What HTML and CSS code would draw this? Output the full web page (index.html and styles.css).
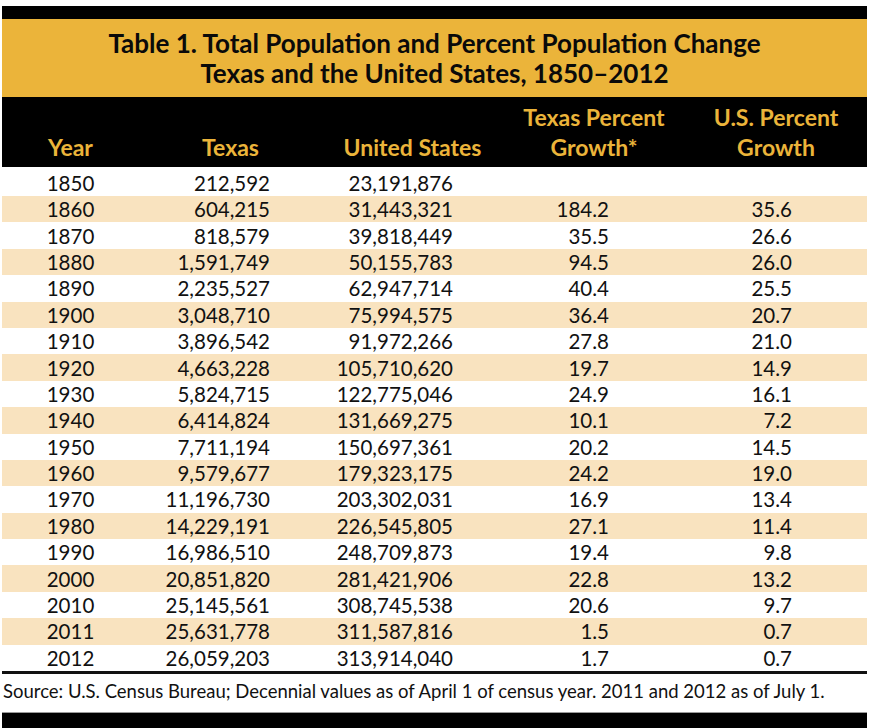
FILE: index.html
```html
<!DOCTYPE html>
<html>
<head>
<meta charset="utf-8">
<link rel="stylesheet" href="styles.css">
</head>
<body>
<div class="page">
  <div class="topbar"></div>
  <div class="title">
    <div>Table 1. Total Population and Percent Population Change</div>
    <div>Texas and the United States, 1850–2012</div>
  </div>
  <table class="data">
    <colgroup>
      <col class="c1"><col class="c2"><col class="c3"><col class="c4"><col class="c5">
    </colgroup>
    <thead>
      <tr>
        <th>Year</th>
        <th>Texas</th>
        <th>United States</th>
        <th>Texas Percent<br>Growth*</th>
        <th>U.S. Percent<br>Growth</th>
      </tr>
    </thead>
    <tbody>
      <tr class="first"><td>1850</td><td>212,592</td><td>23,191,876</td><td></td><td></td></tr>
      <tr class="alt"><td>1860</td><td>604,215</td><td>31,443,321</td><td>184.2</td><td>35.6</td></tr>
      <tr><td>1870</td><td>818,579</td><td>39,818,449</td><td>35.5</td><td>26.6</td></tr>
      <tr class="alt"><td>1880</td><td>1,591,749</td><td>50,155,783</td><td>94.5</td><td>26.0</td></tr>
      <tr><td>1890</td><td>2,235,527</td><td>62,947,714</td><td>40.4</td><td>25.5</td></tr>
      <tr class="alt"><td>1900</td><td>3,048,710</td><td>75,994,575</td><td>36.4</td><td>20.7</td></tr>
      <tr><td>1910</td><td>3,896,542</td><td>91,972,266</td><td>27.8</td><td>21.0</td></tr>
      <tr class="alt"><td>1920</td><td>4,663,228</td><td>105,710,620</td><td>19.7</td><td>14.9</td></tr>
      <tr><td>1930</td><td>5,824,715</td><td>122,775,046</td><td>24.9</td><td>16.1</td></tr>
      <tr class="alt"><td>1940</td><td>6,414,824</td><td>131,669,275</td><td>10.1</td><td>7.2</td></tr>
      <tr><td>1950</td><td>7,711,194</td><td>150,697,361</td><td>20.2</td><td>14.5</td></tr>
      <tr class="alt"><td>1960</td><td>9,579,677</td><td>179,323,175</td><td>24.2</td><td>19.0</td></tr>
      <tr><td>1970</td><td>11,196,730</td><td>203,302,031</td><td>16.9</td><td>13.4</td></tr>
      <tr class="alt"><td>1980</td><td>14,229,191</td><td>226,545,805</td><td>27.1</td><td>11.4</td></tr>
      <tr><td>1990</td><td>16,986,510</td><td>248,709,873</td><td>19.4</td><td>9.8</td></tr>
      <tr class="alt"><td>2000</td><td>20,851,820</td><td>281,421,906</td><td>22.8</td><td>13.2</td></tr>
      <tr><td>2010</td><td>25,145,561</td><td>308,745,538</td><td>20.6</td><td>9.7</td></tr>
      <tr class="alt"><td>2011</td><td>25,631,778</td><td>311,587,816</td><td>1.5</td><td>0.7</td></tr>
      <tr><td>2012</td><td>26,059,203</td><td>313,914,040</td><td>1.7</td><td>0.7</td></tr>
    </tbody>
  </table>
  <div class="source">Source: U.S. Census Bureau; Decennial values as of April 1 of census year. 2011 and 2012 as of July 1.</div>
  <div class="bottombar"></div>
</div>
</body>
</html>
```
FILE: styles.css
```css
html, body {
  margin: 0;
  padding: 0;
  background: #ffffff;
}
.page {
  width: 865px;
  margin-left: 2px;
  padding-top: 6px;
  font-family: "Lato", "Open Sans", sans-serif;
  color: #111111;
}
.topbar {
  height: 13px;
  background: #000000;
}
.title {
  height: 78px;
  box-sizing: border-box;
  padding-top: 9px;
  background: #ebb43a;
  text-align: center;
  font-weight: 700;
  font-size: 26px;
  line-height: 30px;
  color: #0a0a0a;
}
.data {
  width: 865px;
  border-collapse: collapse;
  table-layout: fixed;
  border-bottom: 3px solid #111111;
}
.c1 { width: 137px; }
.c2 { width: 183px; }
.c3 { width: 181px; }
.c4 { width: 182px; }
.c5 { width: 182px; }
.data thead tr {
  background: #000000;
  height: 70px;
}
.data th {
  color: #ebb43a;
  font-weight: 700;
  font-size: 23px;
  line-height: 30px;
  vertical-align: bottom;
  text-align: center;
  padding: 0 0 5px 0;
}
.data td {
  font-size: 20.5px;
  height: 26.4px;
  line-height: 26px;
  padding: 0;
  text-align: right;
  white-space: nowrap;
}
.data tr.first td {
  height: 29px;
  padding-top: 3px;
  box-sizing: border-box;
}
.data td:nth-child(1) { text-align: center; }
.data td:nth-child(2) { padding-right: 52px; }
.data td:nth-child(3) { padding-right: 50px; }
.data td:nth-child(4) { padding-right: 76px; }
.data td:nth-child(5) { padding-right: 75px; }
.data tr.alt { background: #f9e3bf; }
.source {
  height: 38px;
  line-height: 34px;
  font-size: 18.5px;
  padding-left: 1px;
  white-space: nowrap;
}
.bottombar {
  height: 16px;
  background: #000000;
  border-top: 1px solid #9a9a9a;
  box-sizing: border-box;
}
```
